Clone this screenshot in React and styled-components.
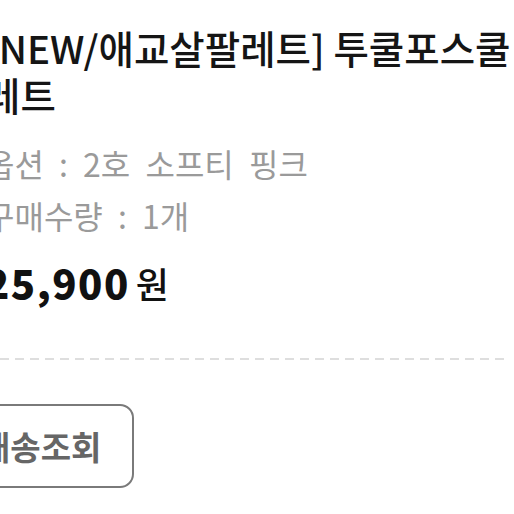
import React from "react";
import styled, { createGlobalStyle } from "styled-components";

const Global = createGlobalStyle`
  html, body {
    margin: 0;
    padding: 0;
    background: #ffffff;
    overflow: hidden;
  }
  body {
    font-family: "Noto Sans CJK KR", "Noto Sans", sans-serif;
  }
`;

const Page = styled.div`
  width: 514px;
  height: 514px;
  overflow: hidden;
  display: flex;
  flex-direction: column;
`;

const Content = styled.div`
  display: flex;
  flex-direction: column;
  margin-left: -15px;
  padding-top: 24px;
`;

const Title = styled.h1`
  margin: 0;
  width: 704px;
  font-size: 38.5px;
  font-weight: 500;
  line-height: 47px;
  color: #151515;
`;

const InfoList = styled.div`
  display: flex;
  flex-direction: column;
  margin-top: 25px;
  gap: 12px;
`;

const InfoRow = styled.div`
  font-size: 32px;
  line-height: 40px;
  color: #9a9a9a;
  font-weight: 400;
  word-spacing: 8px;
  white-space: nowrap;
`;

const Price = styled.div`
  display: flex;
  align-items: baseline;
  margin-top: 23px;
  line-height: 48px;
  color: #111;
`;

const Amount = styled.span`
  font-size: 40px;
  font-weight: 900;
  letter-spacing: 1.5px;
`;

const Unit = styled.span`
  font-size: 36px;
  font-weight: 500;
  margin-left: 6px;
`;

const Divider = styled.div`
  height: 2px;
  margin-top: 51px;
  width: 525px;
  background: repeating-linear-gradient(
    to right,
    #dedede 0 9px,
    transparent 9px 15px
  );
`;

const ActionRow = styled.div`
  display: flex;
  margin-top: 44px;
`;

const OutlineButton = styled.button`
  margin-left: -38px;
  height: 84px;
  padding: 0 31px;
  border: 2px solid #7a7a7a;
  border-radius: 14px;
  background: #fff;
  font-family: "Noto Sans CJK KR", sans-serif;
  font-size: 33px;
  font-weight: 700;
  color: #666;
  display: flex;
  align-items: center;
`;

export default function App() {
  return (
    <Page>
      <Global />
      <Content>
        <Title>[NEW/애교살팔레트] 투쿨포스쿨 애교살팔레트</Title>
        <InfoList>
          <InfoRow>옵션 : 2호 소프티 핑크</InfoRow>
          <InfoRow>구매수량 : 1개</InfoRow>
        </InfoList>
        <Price>
          <Amount>25,900</Amount>
          <Unit>원</Unit>
        </Price>
        <Divider />
        <ActionRow>
          <OutlineButton>배송조회</OutlineButton>
        </ActionRow>
      </Content>
    </Page>
  );
}
